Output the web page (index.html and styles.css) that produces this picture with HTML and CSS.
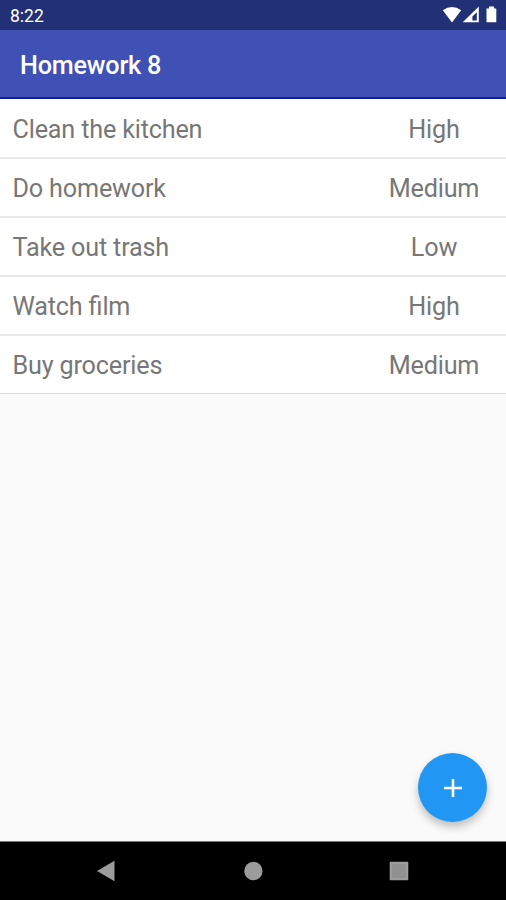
FILE: index.html
```html
<!DOCTYPE html>
<html lang="en">
<head>
<meta charset="utf-8">
<meta name="viewport" content="width=device-width, initial-scale=1">
<title>Homework 8</title>
<link rel="stylesheet" href="styles.css">
</head>
<body>
<div class="screen">
  <div class="status-bar">
    <span class="clock">8:22</span>
    <svg class="status-icons" width="56" height="20" viewBox="0 0 56 20" aria-hidden="true">
      <path d="M.8 5.2Q10 -1.2 19.2 5.2L10 17.5Z" fill="#fff"/>
      <path fill-rule="evenodd" d="M20.7 17.3L36.8 1.5V17.3ZM30.4 15.6H34.8V7.2L30.4 11.4Z" fill="#fff"/>
      <path d="M44.5 3.5H47V1.5H52V3.5H54.3V17.3H44.5Z" fill="#fff"/>
    </svg>
  </div>
  <header class="app-bar"><h1 class="title">Homework 8</h1></header>
  <main class="content">
    <ul class="tasks">
      <li class="task"><span class="name">Clean the kitchen</span><span class="priority">High</span></li>
      <li class="task"><span class="name">Do homework</span><span class="priority">Medium</span></li>
      <li class="task"><span class="name">Take out trash</span><span class="priority">Low</span></li>
      <li class="task"><span class="name">Watch film</span><span class="priority">High</span></li>
      <li class="task"><span class="name">Buy groceries</span><span class="priority">Medium</span></li>
    </ul>
    <button class="fab" aria-label="Add task">
      <svg width="18" height="18" viewBox="0 0 18 18"><path d="M9 0V18M0 9H18" stroke="#fff" stroke-width="2.6"/></svg>
    </button>
  </main>
  <nav class="nav-bar">
    <svg class="nav-icon" width="22" height="22" viewBox="0 0 22 22"><path d="M2 11L19.5 .7V21.3Z"/></svg>
    <svg class="nav-icon" width="22" height="22" viewBox="0 0 22 22"><circle cx="11.4" cy="11" r="9.2"/></svg>
    <svg class="nav-icon" width="22" height="22" viewBox="0 0 22 22"><rect x="1.7" y="1.7" width="18.6" height="18.6" rx="1"/><rect class="core" x="4" y="4" width="14" height="14"/></svg>
  </nav>
</div>
</body>
</html>
```
FILE: styles.css
```css
* { box-sizing: border-box; }

body {
  margin: 0;
  font-family: Roboto, sans-serif;
}

.screen {
  display: flex;
  flex-direction: column;
  height: 900px;
  background: #fafafa;
}

.status-bar {
  display: flex;
  align-items: center;
  justify-content: space-between;
  height: 30px;
  padding: 1px 8px 0 10px;
  background: #223076;
  color: #fff;
}

.clock {
  font-size: 17.5px;
  line-height: 30px;
}

.status-icons { margin-bottom: 1px; }

.app-bar {
  display: flex;
  align-items: center;
  height: 69px;
  padding: 4px 20px 0;
  background: #3f51b5;
  border-bottom: 2px solid #101d9c;
}

.title {
  margin: 0;
  color: #fff;
  font-size: 25.2px;
  font-weight: 500;
  letter-spacing: -.2px;
}

.content {
  position: relative;
  flex: 1;
}

.tasks {
  margin: 0;
  padding: 1px 0 0;
  background: #fff;
  list-style: none;
}

.task {
  display: flex;
  align-items: center;
  height: 59px;
  padding: 1px 0 0 12.5px;
  border-bottom: 2px solid #e9e9e9;
  color: #777;
  font-size: 25.2px;
  font-feature-settings: "liga";
  letter-spacing: -.18px;
}

.task:last-child {
  height: 58px;
  border-bottom: 1px solid #d8d8d8;
}

.name { flex: 1; }

.priority {
  width: 144px;
  text-align: center;
}

.fab {
  position: absolute;
  right: 19px;
  bottom: 19px;
  display: flex;
  align-items: center;
  justify-content: center;
  width: 69px;
  height: 69px;
  padding: 0;
  border: 0;
  border-radius: 50%;
  background: #2196f3;
  box-shadow: 0 5px 9px rgba(0, 0, 0, .24);
}

.nav-bar {
  display: flex;
  align-items: center;
  justify-content: space-between;
  height: 59px;
  padding: 0 96px 0 95px;
  background: #000;
  border-top: 1px solid #777;
}

.nav-icon { fill: #9c9c9c; }

.core { fill: #919191; }
```
